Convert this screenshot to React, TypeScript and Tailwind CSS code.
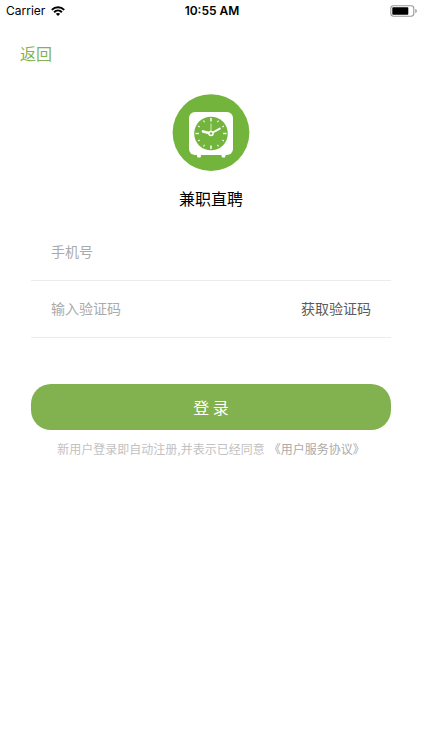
const ticks = [0, 30, 60, 90, 120, 150, 180, 210, 240, 270, 300, 330];

function StatusBar() {
  return (
    <div className="grid h-[22px] grid-cols-3 items-center pr-1 pl-[6px] font-['Inter','Liberation_Sans',sans-serif] text-xs text-black">
      <div className="flex items-center gap-[6px]">
        <span>Carrier</span>
        <svg width="14" height="10" viewBox="0 0 14 10" fill="none" stroke="#000" strokeWidth="2" aria-hidden="true">
          <path d="M0.8 3.9 C4.3 0.2 9.7 0.2 13.2 3.9" />
          <path d="M3.1 6.2 C5.3 4 8.7 4 10.9 6.2" />
          <path d="M7 10 L4.8 7.8 C6 6.7 8 6.7 9.2 7.8 Z" fill="#000" stroke="none" />
        </svg>
      </div>
      <span className="text-center font-semibold whitespace-nowrap">10:55 AM</span>
      <svg className="justify-self-end" width="28" height="12" viewBox="0 0 28 12" aria-hidden="true">
        <rect x="0.8" y="0.8" width="23" height="10.4" rx="2.6" fill="#fff" stroke="#999" strokeWidth="1.1" />
        <rect x="2.3" y="2.3" width="16" height="7.4" rx="0.8" fill="#000" />
        <path d="M25.3 4 C27.3 4.6 27.3 7.4 25.3 8 Z" fill="#999" />
      </svg>
    </div>
  );
}

function Logo() {
  return (
    <svg width="78" height="78" viewBox="0 0 78 78" aria-hidden="true">
      <circle cx="39" cy="38.6" r="38.4" fill="#73b43c" />
      <rect x="17" y="18" width="44" height="43" rx="6" fill="#fff" />
      <path d="M24.5 60 h5 l-1 3.4 h-3 Z M49 60 h5 l-1 3.4 h-3 Z" fill="#fff" />
      <circle cx="39" cy="39.5" r="16.8" fill="#73b43c" />
      {ticks.map((angle) => (
        <path
          key={angle}
          d={angle % 90 === 0 ? "M39 24 V27.4" : "M39 24.6 V26.4"}
          stroke="#fff"
          strokeWidth={angle % 90 === 0 ? 1.4 : 1}
          transform={`rotate(${angle} 39 39.5)`}
        />
      ))}
      <path d="M39 29.5 V42" stroke="#d5e9c5" strokeWidth="1" />
      <path d="M39 39.5 L31 37.4" stroke="#fff" strokeWidth="2.6" strokeLinecap="round" />
      <path d="M39 39.5 L47.8 34.6" stroke="#fff" strokeWidth="2" strokeLinecap="round" />
      <circle cx="39" cy="39.5" r="2.8" fill="#fff" />
      <circle cx="39" cy="39.5" r="1.2" fill="#73b43c" />
    </svg>
  );
}

export default function App() {
  return (
    <div className="min-h-screen bg-white font-['Noto_Sans_CJK_SC',sans-serif]">
      <StatusBar />
      <header className="flex h-[62px] items-center px-5">
        <button type="button" className="text-base text-[#82b34f]">返回</button>
      </header>
      <main className="px-[31px] pt-[10px]">
        <div className="flex flex-col items-center gap-[14px]">
          <Logo />
          <h1 className="text-base leading-6 text-black">兼职直聘</h1>
        </div>
        <form className="mt-[14px]" onSubmit={(event) => event.preventDefault()}>
          <div className="flex h-[57px] items-center border-b border-[#ececec] px-5 pb-[2px]">
            <input
              type="tel"
              aria-label="手机号"
              placeholder="手机号"
              className="min-w-0 flex-1 text-sm text-[#555] outline-none placeholder:text-[#aaa]"
            />
          </div>
          <div className="flex h-[57px] items-center border-b border-[#ececec] px-5 pb-[2px]">
            <input
              type="text"
              inputMode="numeric"
              aria-label="输入验证码"
              placeholder="输入验证码"
              className="min-w-0 flex-1 text-sm text-[#555] outline-none placeholder:text-[#aaa]"
            />
            <button type="button" className="text-sm text-[#5c5c5c]">获取验证码</button>
          </div>
          <button
            type="submit"
            className="mt-[46px] h-[46px] w-full rounded-[20px] bg-[#82b250] text-base text-white"
          >
            登 录
          </button>
        </form>
        <p className="mt-[9px] text-center text-xs leading-5 whitespace-nowrap text-[#c2c2c2]">
          新用户登录即自动注册,并表示已经同意
          <a href="#terms" className="ml-1 text-[#aaa]">《用户服务协议》</a>
        </p>
      </main>
    </div>
  );
}
